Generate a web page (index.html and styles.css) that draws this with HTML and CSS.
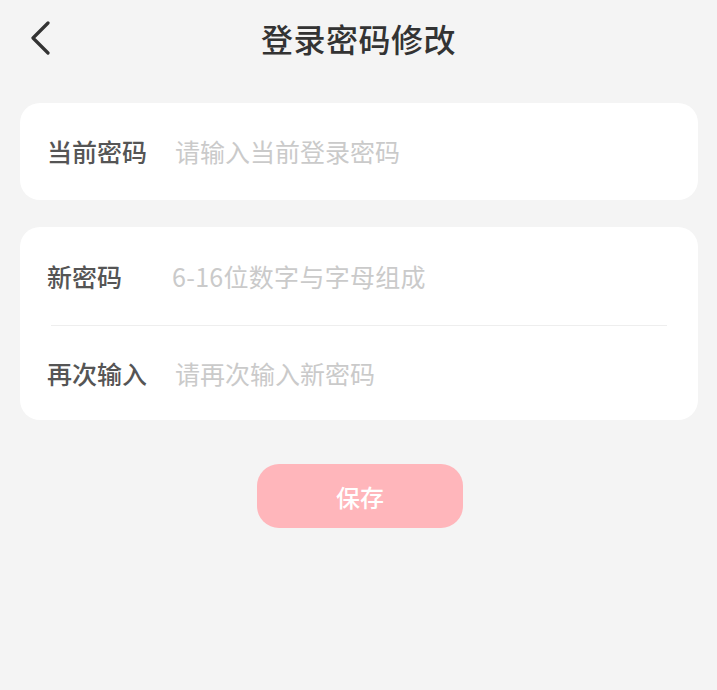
FILE: index.html
```html
<!DOCTYPE html>
<html lang="zh">
<head>
<meta charset="utf-8">
<link rel="stylesheet" href="styles.css">
</head>
<body>
<header class="nav">
  <span class="back"><svg width="22" height="34" viewBox="0 0 22 34"><path d="M19 2 L4 17 L19 32" fill="none" stroke="#333" stroke-width="3.2" stroke-linecap="round" stroke-linejoin="round"/></svg></span>
  <h1 class="title">登录密码修改</h1>
</header>
<main class="content">
  <section class="card">
    <div class="row row-single">
      <span class="label">当前密码</span>
      <span class="placeholder">请输入当前登录密码</span>
    </div>
  </section>
  <section class="card">
    <div class="row row-top">
      <span class="label">新密码</span>
      <span class="placeholder ph-num">6-16位数字与字母组成</span>
    </div>
    <div class="divider"></div>
    <div class="row row-bottom">
      <span class="label">再次输入</span>
      <span class="placeholder">请再次输入新密码</span>
    </div>
  </section>
  <div class="actions">
    <button class="save">保存</button>
  </div>
</main>
</body>
</html>
```
FILE: styles.css
```css
html, body {
  margin: 0;
  padding: 0;
  background: #f4f4f4;
  font-family: "Noto Sans CJK SC", "Noto Sans", sans-serif;
}
.nav {
  position: relative;
  height: 76px;
  display: flex;
  align-items: center;
  justify-content: center;
}
.back {
  position: absolute;
  left: 29px;
  top: 21px;
  width: 22px;
  height: 34px;
  display: block;
}
.back svg { display: block; }
.title {
  margin: 0;
  font-size: 32px;
  font-weight: 500;
  color: #333;
  line-height: 1;
  letter-spacing: 0.5px;
}
.content {
  padding: 27px 19px 0 20px;
  display: flex;
  flex-direction: column;
  gap: 27px;
}
.card {
  background: #fff;
  border-radius: 20px;
}
.row {
  display: flex;
  align-items: center;
  padding-left: 27px;
}
.row-single { height: 97px; }
.row-top { height: 98px; }
.row-bottom { height: 94px; }
.label {
  width: 128px;
  flex: none;
  font-size: 25px;
  font-weight: 500;
  color: #555;
  line-height: 1;
}
.placeholder {
  font-size: 25px;
  color: #cacaca;
  line-height: 1;
}
.ph-num { margin-left: -3px; letter-spacing: 0.3px; }
.divider {
  height: 1px;
  background: #eeeeee;
  margin: 0 31px 0 31px;
}
.actions {
  display: flex;
  justify-content: center;
  padding-top: 17px;
}
.save {
  width: 206px;
  height: 64px;
  border: none;
  border-radius: 22px;
  background: #ffb6bb;
  color: #fff;
  font-family: "Noto Sans CJK SC", sans-serif;
  font-size: 24px;
  font-weight: 500;
  margin-left: 2px;
}
```
